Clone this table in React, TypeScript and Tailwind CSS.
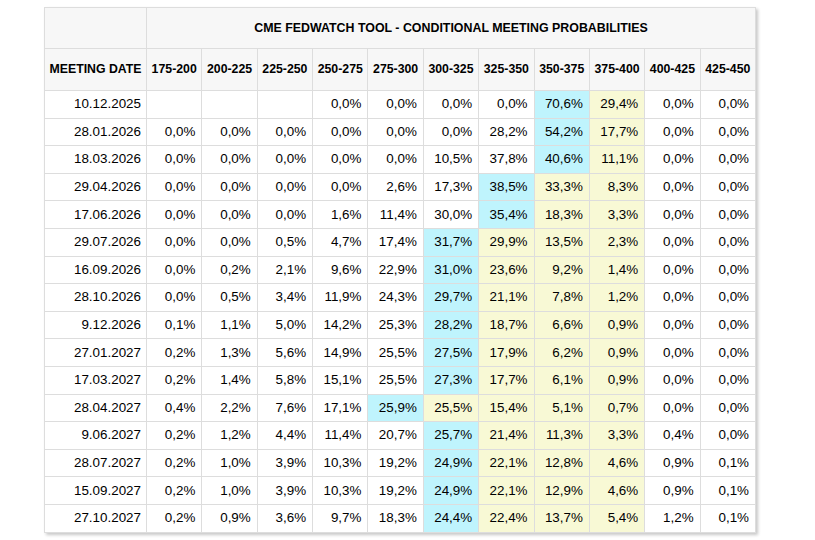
import React from "react";

const cols = ["175-200","200-225","225-250","250-275","275-300","300-325","325-350","350-375","375-400","400-425","425-450"];

const rows: [string, string[]][] = [
  ["10.12.2025", ["","","","0,0%","0,0%","0,0%","0,0%","70,6%","29,4%","0,0%","0,0%"]],
  ["28.01.2026", ["0,0%","0,0%","0,0%","0,0%","0,0%","0,0%","28,2%","54,2%","17,7%","0,0%","0,0%"]],
  ["18.03.2026", ["0,0%","0,0%","0,0%","0,0%","0,0%","10,5%","37,8%","40,6%","11,1%","0,0%","0,0%"]],
  ["29.04.2026", ["0,0%","0,0%","0,0%","0,0%","2,6%","17,3%","38,5%","33,3%","8,3%","0,0%","0,0%"]],
  ["17.06.2026", ["0,0%","0,0%","0,0%","1,6%","11,4%","30,0%","35,4%","18,3%","3,3%","0,0%","0,0%"]],
  ["29.07.2026", ["0,0%","0,0%","0,5%","4,7%","17,4%","31,7%","29,9%","13,5%","2,3%","0,0%","0,0%"]],
  ["16.09.2026", ["0,0%","0,2%","2,1%","9,6%","22,9%","31,0%","23,6%","9,2%","1,4%","0,0%","0,0%"]],
  ["28.10.2026", ["0,0%","0,5%","3,4%","11,9%","24,3%","29,7%","21,1%","7,8%","1,2%","0,0%","0,0%"]],
  ["9.12.2026", ["0,1%","1,1%","5,0%","14,2%","25,3%","28,2%","18,7%","6,6%","0,9%","0,0%","0,0%"]],
  ["27.01.2027", ["0,2%","1,3%","5,6%","14,9%","25,5%","27,5%","17,9%","6,2%","0,9%","0,0%","0,0%"]],
  ["17.03.2027", ["0,2%","1,4%","5,8%","15,1%","25,5%","27,3%","17,7%","6,1%","0,9%","0,0%","0,0%"]],
  ["28.04.2027", ["0,4%","2,2%","7,6%","17,1%","25,9%","25,5%","15,4%","5,1%","0,7%","0,0%","0,0%"]],
  ["9.06.2027", ["0,2%","1,2%","4,4%","11,4%","20,7%","25,7%","21,4%","11,3%","3,3%","0,4%","0,0%"]],
  ["28.07.2027", ["0,2%","1,0%","3,9%","10,3%","19,2%","24,9%","22,1%","12,8%","4,6%","0,9%","0,1%"]],
  ["15.09.2027", ["0,2%","1,0%","3,9%","10,3%","19,2%","24,9%","22,1%","12,9%","4,6%","0,9%","0,1%"]],
  ["27.10.2027", ["0,2%","0,9%","3,6%","9,7%","18,3%","24,4%","22,4%","13,7%","5,4%","1,2%","0,1%"]],
];

const blueIdx = [7,7,7,6,6,5,5,5,5,5,5,4,5,5,5,5];

export default function App() {
  return (
    <div className="w-[815px] h-[540px] bg-white pt-[7px] pl-[44px] text-black" style={{ fontFamily: '"Liberation Sans", Arial, sans-serif' }}>
      <table className="table-fixed border-collapse w-[712px] shadow-[2px_2px_3px_rgba(0,0,0,0.22)]">
        <colgroup>
          <col className="w-[102px]" />
          {cols.map((c) => (
            <col key={c} />
          ))}
        </colgroup>
        <thead>
          <tr className="h-[41px] bg-[#f7f7f7]">
            <th className="border border-[#dddddd]"></th>
            <th colSpan={11} className="border border-[#dddddd] text-[12.4px] font-bold text-center">
              CME FEDWATCH TOOL - CONDITIONAL MEETING PROBABILITIES
            </th>
          </tr>
          <tr className="h-[42px] bg-[#f7f7f7]">
            <th className="border border-[#dddddd] text-[12.3px] font-bold text-center whitespace-nowrap">MEETING DATE</th>
            {cols.map((c) => (
              <th key={c} className="border border-[#dddddd] text-[12.3px] font-bold text-center whitespace-nowrap">{c}</th>
            ))}
          </tr>
        </thead>
        <tbody>
          {rows.map(([date, vals], ri) => (
            <tr key={date} className="h-[27.6px]">
              <td className="border border-[#dddddd] text-[13.4px] text-right pr-[5px] whitespace-nowrap">{date}</td>
              {vals.map((v, ci) => {
                const b = blueIdx[ri];
                const bg = ci === b ? "bg-[#bff4fd]" : ci > b && ci <= 8 ? "bg-[#f8f9d5]" : "bg-white";
                return (
                  <td key={ci} className={`border border-[#dddddd] text-[13.4px] text-right pr-[6px] whitespace-nowrap ${bg}`}>
                    {v}
                  </td>
                );
              })}
            </tr>
          ))}
        </tbody>
      </table>
    </div>
  );
}
